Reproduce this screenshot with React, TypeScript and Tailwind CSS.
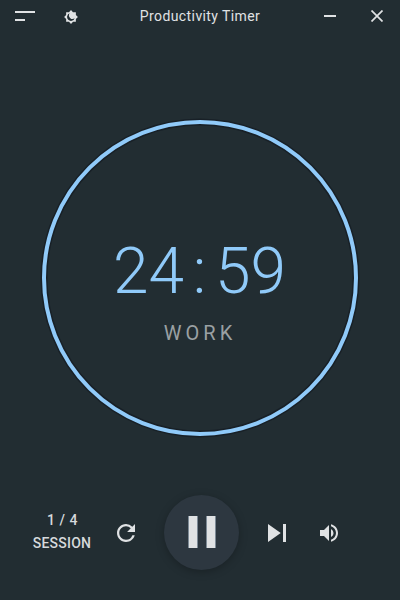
import React from "react";

function ThemeIcon() {
  return (
    <svg className="h-[14px] w-[14px]" viewBox=".5 .5 23 23">
      <path
        fill="#e0e2e4"
        fillRule="evenodd"
        d="M20 8.69V4h-4.69L12 .69 8.69 4H4v4.69L.69 12 4 15.31V20h4.69L12 23.31 15.31 20H20v-4.69L23.31 12 20 8.69zM9.8 6A6.4 6.4 0 1 0 18 14.2A5.9 5.9 0 0 1 9.8 6z"
      />
    </svg>
  );
}

function TitleBar() {
  return (
    <header className="flex h-8 items-center">
      <button className="ml-[15px] flex h-[10px] w-5 flex-col justify-between">
        <span className="h-[2px] w-5 bg-[#e0e2e4]" />
        <span className="h-[2px] w-[10px] bg-[#e0e2e4]" />
      </button>
      <button className="mt-[2px] ml-[29px]">
        <ThemeIcon />
      </button>
      <h1 className="ml-[52px] w-[140px] text-center text-[14px] leading-8 tracking-[0.4px] whitespace-nowrap text-[#e0e2e4]">
        Productivity Timer
      </h1>
      <button className="ml-[54px] h-[2px] w-3 bg-[#e0e2e4]" />
      <button className="ml-[35px]">
        <svg className="h-3 w-3" viewBox="0 0 12 12" stroke="#e0e2e4" strokeWidth="1.7">
          <path d="M.5 .5 11.5 11.5M11.5 .5 .5 11.5" />
        </svg>
      </button>
    </header>
  );
}

function Dial() {
  return (
    <section className="mt-[86px] ml-[40px] grid h-[320px] w-[320px] place-items-center">
      <svg className="col-start-1 row-start-1 h-[320px] w-[320px]" viewBox="0 0 320 320" fill="none">
        <circle cx="160" cy="160" r="156" stroke="#182027" strokeWidth="7" />
        <circle cx="160" cy="160" r="156" stroke="#90caf9" strokeWidth="4" />
      </svg>
      <div className="col-start-1 row-start-1 flex flex-col items-center pt-[23px]">
        <div className="-ml-px flex text-[64px] leading-[75px] font-light text-[#90caf9]">
          <span className="w-[73px] text-center">24</span>
          <span className="w-[29px] text-center">:</span>
          <span className="w-[73px] text-center">59</span>
        </div>
        <p className="mt-[12px] text-[20px] leading-6 tracking-[4px] text-[#9aa0a3]">WORK</p>
      </div>
    </section>
  );
}

function Controls() {
  return (
    <footer className="mt-[57px] flex h-[75px] items-center">
      <div className="ml-[22px] w-20 pb-px text-center text-[14px] leading-[23px] font-medium text-[#d6d9dc]">
        <p className="pl-px tracking-[0.5px]">1 / 4</p>
        <p className="tracking-[0.25px]">SESSION</p>
      </div>
      <button className="ml-[15px]">
        <svg className="h-[18px] w-[18px]" viewBox="4 4 16 16" fill="#e0e2e4">
          <path d="M17.65 6.35A7.958 7.958 0 0 0 12 4c-4.42 0-7.99 3.58-7.99 8s3.57 8 7.99 8c3.73 0 6.84-2.55 7.73-6h-2.08A5.99 5.99 0 0 1 12 18c-3.31 0-6-2.69-6-6s2.69-6 6-6c1.66 0 3.14.69 4.22 1.78L13 11h7V4l-2.35 2.35z" />
        </svg>
      </button>
      <button className="ml-[29px] flex h-[75px] w-[75px] items-center justify-center gap-2 rounded-full bg-[#2d3740] pb-px shadow-[0_2px_8px_rgba(0,0,0,0.25)]">
        <span className="h-8 w-[10px] border-x border-[#7d8a96] bg-[#e0e2e4]" />
        <span className="h-8 w-[10px] border-x border-[#7d8a96] bg-[#e0e2e4]" />
      </button>
      <button className="ml-[29px]">
        <svg className="h-[18px] w-[18px]" viewBox="6 6 12 12" fill="#e0e2e4">
          <path d="M6 18l8.5-6L6 6v12zM16 6v12h2V6h-2z" />
        </svg>
      </button>
      <button className="ml-[34px]">
        <svg className="h-[18px] w-[18px]" viewBox="3 3 18 18" fill="#e0e2e4">
          <path d="M3 9v6h4l5 5V4L7 9H3zm13.5 3A4.5 4.5 0 0 0 14 7.97v8.05c1.48-.73 2.5-2.25 2.5-4.02zM14 3.23v2.06c2.89.86 5 3.54 5 6.71s-2.11 5.85-5 6.71v2.06c4.01-.91 7-4.49 7-8.77s-2.99-7.86-7-8.77z" />
        </svg>
      </button>
    </footer>
  );
}

export default function App() {
  return (
    <main className="h-[600px] w-[400px] overflow-hidden bg-[#222d32] font-[Roboto,sans-serif]">
      <TitleBar />
      <Dial />
      <Controls />
    </main>
  );
}
